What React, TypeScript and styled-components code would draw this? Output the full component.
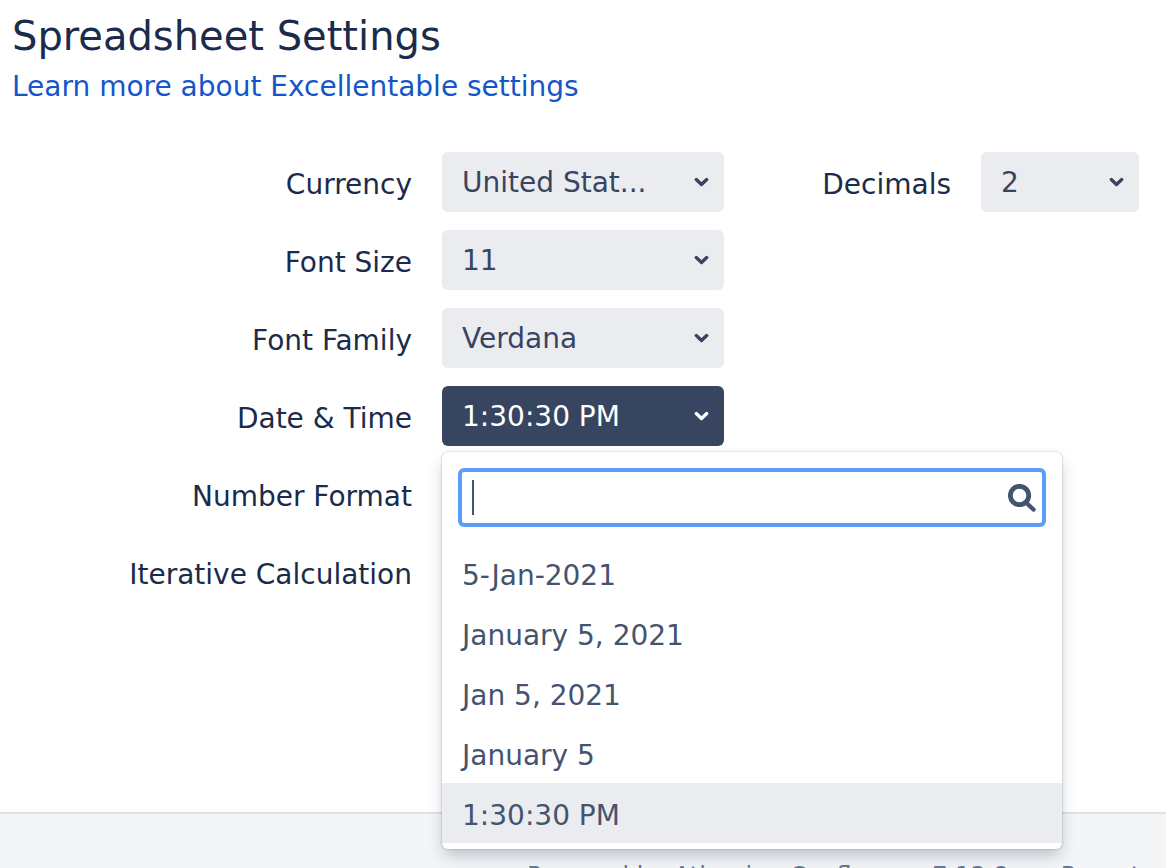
import React, { useState } from "react";
import styled, { createGlobalStyle, css } from "styled-components";

const GlobalStyle = createGlobalStyle`
  *, *::before, *::after { box-sizing: border-box; }
  html, body { margin: 0; background: #ffffff; }
  html { overflow: hidden; }
  body, input, select, button {
    font-family: Verdana, "DejaVu Sans", sans-serif;
    font-size: 28px;
    line-height: 40px;
  }
`;

const Page = styled.div`
  display: flex;
  flex-direction: column;
  min-height: 100vh;
  color: #1b2b4b;
`;

const Header = styled.header`
  padding: 12px 12px 0;
`;

const Title = styled.h1`
  margin: 0;
  font-size: 40px;
  font-weight: 400;
  line-height: 48px;
`;

const HelpLink = styled.a`
  display: block;
  margin-top: 7px;
  color: #1456c8;
  text-decoration: none;
`;

const Form = styled.form`
  display: flex;
  flex-direction: column;
  gap: 18px;
  padding: 45px 27px 210px 0;
`;

const Row = styled.div`
  display: flex;
  align-items: center;
  height: 60px;
`;

const Label = styled.label`
  flex: none;
  width: 412px;
  margin-right: 30px;
  padding-top: 6px;
  text-align: right;
  white-space: nowrap;
`;

const SideLabel = styled(Label)`
  width: auto;
  margin-left: auto;
`;

const Field = styled.div<{ $narrow?: boolean }>`
  position: relative;
  display: flex;
  align-items: center;
  flex: none;
  width: ${(p) => (p.$narrow ? 158 : 282)}px;
`;

const control = css`
  width: 100%;
  height: 60px;
  margin: 0;
  padding: 2px 56px 0 20px;
  border: 0;
  border-radius: 6px;
  outline: 0;
  text-align: left;
`;

const Select = styled.select`
  ${control}
  appearance: none;
  background: #ebecf0;
  color: #384560;
`;

const OpenButton = styled.button`
  ${control}
  background: #384560;
  color: #ffffff;
`;

const Chevron = styled.svg<{ $light?: boolean }>`
  position: absolute;
  right: 14px;
  width: 16px;
  height: 12px;
  fill: none;
  stroke: ${(p) => (p.$light ? "#ffffff" : "#384560")};
  stroke-width: 3.4;
  stroke-linecap: round;
  stroke-linejoin: round;
  pointer-events: none;
`;

const Menu = styled.div`
  position: absolute;
  z-index: 1;
  top: 100%;
  left: 0;
  width: 620px;
  margin-top: 6px;
  padding: 16px 0 6px;
  border-radius: 6px;
  background: #ffffff;
  box-shadow: 0 8px 16px -2px rgba(9, 30, 66, 0.25), 0 0 2px rgba(9, 30, 66, 0.31);
`;

const SearchBox = styled.div`
  display: flex;
  align-items: center;
  height: 59px;
  margin: 0 16px 16px;
  padding: 0 6px 0 10px;
  border: 4px solid #5e9cfa;
  border-radius: 6px;
`;

const Caret = styled.span`
  width: 2px;
  height: 35px;
  background: #44546f;
`;

const SearchInput = styled.input`
  flex: 1;
  min-width: 0;
  padding: 0;
  border: 0;
  outline: 0;
  background: transparent;
  color: #44546f;
  caret-color: transparent;
`;

const SearchIcon = styled.svg`
  flex: none;
  width: 28px;
  height: 28px;
  fill: none;
  stroke: #44546f;
  stroke-linecap: round;
`;

const Options = styled.ul`
  margin: 0;
  padding: 0;
  list-style: none;
`;

const Option = styled.li<{ $selected: boolean }>`
  padding: 13px 20px 7px;
  background: ${(p) => (p.$selected ? "#ebecf0" : "transparent")};
  color: #44546f;
`;

const Footer = styled.footer`
  display: flex;
  flex: 1;
  gap: 52px;
  padding: 46px 0 0 527px;
  border-top: 2px solid #dfe1e3;
  background: #f4f5f7;
  color: #6b778c;
  font-size: 24px;
  line-height: 32px;
  white-space: nowrap;
`;

const DATE_FORMATS = ["5-Jan-2021", "January 5, 2021", "Jan 5, 2021", "January 5", "1:30:30 PM"];

function Arrow({ light }: { light?: boolean }) {
  return (
    <Chevron viewBox="0 0 16 12" $light={light} aria-hidden="true">
      <path d="M2.3 3.6 7.5 8.4 12.7 3.6" />
    </Chevron>
  );
}

function Dropdown({ id, value, narrow }: { id: string; value: string; narrow?: boolean }) {
  return (
    <Field $narrow={narrow}>
      <Select id={id} defaultValue={value}>
        <option>{value}</option>
      </Select>
      <Arrow />
    </Field>
  );
}

export default function App() {
  const [format, setFormat] = useState("1:30:30 PM");
  const [query, setQuery] = useState("");

  return (
    <Page>
      <GlobalStyle />
      <Header>
        <Title>Spreadsheet Settings</Title>
        <HelpLink href="#settings">Learn more about Excellentable settings</HelpLink>
      </Header>
      <Form>
        <Row>
          <Label htmlFor="currency">Currency</Label>
          <Dropdown id="currency" value="United Stat..." />
          <SideLabel htmlFor="decimals">Decimals</SideLabel>
          <Dropdown id="decimals" value="2" narrow />
        </Row>
        <Row>
          <Label htmlFor="font-size">Font Size</Label>
          <Dropdown id="font-size" value="11" />
        </Row>
        <Row>
          <Label htmlFor="font-family">Font Family</Label>
          <Dropdown id="font-family" value="Verdana" />
        </Row>
        <Row>
          <Label htmlFor="date-time">Date &amp; Time</Label>
          <Field>
            <OpenButton id="date-time" type="button" aria-haspopup="listbox" aria-expanded="true">
              {format}
            </OpenButton>
            <Arrow light />
            <Menu>
              <SearchBox>
                {query === "" && <Caret aria-hidden="true" />}
                <SearchInput
                  type="text"
                  aria-label="Search formats"
                  value={query}
                  onChange={(e) => setQuery(e.target.value)}
                />
                <SearchIcon viewBox="0 0 28 28" aria-hidden="true">
                  <circle cx="11.5" cy="11.5" r="9.2" strokeWidth="4.8" />
                  <path d="M19 19.5 25.5 25.5" strokeWidth="4.4" />
                </SearchIcon>
              </SearchBox>
              <Options role="listbox" aria-label="Date and time formats">
                {DATE_FORMATS.filter((f) => f.toLowerCase().includes(query.toLowerCase())).map((f) => (
                  <Option
                    key={f}
                    role="option"
                    aria-selected={f === format}
                    $selected={f === format}
                    onClick={() => setFormat(f)}
                  >
                    {f}
                  </Option>
                ))}
              </Options>
            </Menu>
          </Field>
        </Row>
        <Row>
          <Label as="span">Number Format</Label>
        </Row>
        <Row>
          <Label as="span">Iterative Calculation</Label>
        </Row>
      </Form>
      <Footer>
        <span>Powered by Atlassian Confluence 7.13.8</span>
        <span>Report</span>
      </Footer>
    </Page>
  );
}
